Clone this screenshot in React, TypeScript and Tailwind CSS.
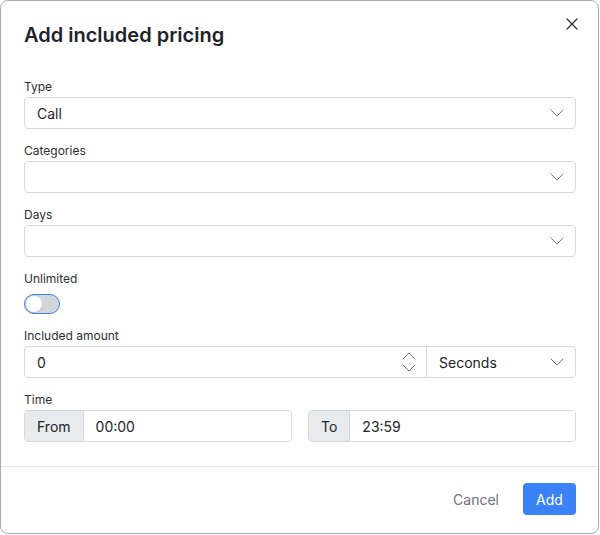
import { X } from 'lucide-react';

function Label({ children }: { children: React.ReactNode }) {
  return <label className="block text-[12px] leading-5 text-[#2b2f33]">{children}</label>;
}

function Chevron({ up = false }: { up?: boolean }) {
  return (
    <svg width="14" height="8" viewBox="0 0 14 8" fill="none" className="text-[#6c7278]">
      <polyline
        points={up ? '1,7 7,1 13,7' : '1,1 7,7 13,1'}
        stroke="currentColor"
        strokeWidth="1"
        strokeLinecap="round"
        strokeLinejoin="round"
      />
    </svg>
  );
}

function SelectBox({ value }: { value?: string }) {
  return (
    <div className="flex h-8 items-center justify-between rounded border border-[#d4d8dd] bg-white pl-3 pr-[11px] text-[14px] text-[#212529]">
      <span>{value}</span>
      <Chevron />
    </div>
  );
}

function TimeGroup({ label, value }: { label: string; value: string }) {
  return (
    <div className="flex h-8 flex-1 overflow-hidden rounded border border-[#d4d8dd] text-[14px] text-[#212529]">
      <div className="flex items-center border-r border-[#d4d8dd] bg-[#e8ebee] px-3">{label}</div>
      <div className="flex flex-1 items-center bg-white px-3">{value}</div>
    </div>
  );
}

export default function App() {
  return (
    <div className="h-[535px] w-[600px] bg-white" style={{ fontFamily: 'Inter, "Noto Sans", sans-serif' }}>
      <div className="flex h-[534px] w-[599px] flex-col rounded-[8px] border border-[#a9acaf] bg-white">
        <div className="relative pl-[23px] pr-[22px] pt-[20px]">
          <h2 className="text-[20px] font-semibold leading-7 text-[#1f2327]">Add included pricing</h2>
          <button className="absolute right-[12px] top-[9px] p-1 text-[#2b2f33]">
            <X size={20} strokeWidth={1.5} />
          </button>
        </div>

        <div className="flex flex-col gap-3 pl-[23px] pr-[22px] pt-[28px] pb-6">
          <div>
            <Label>Type</Label>
            <SelectBox value="Call" />
          </div>
          <div>
            <Label>Categories</Label>
            <SelectBox />
          </div>
          <div>
            <Label>Days</Label>
            <SelectBox />
          </div>
          <div>
            <Label>Unlimited</Label>
            <div className="flex h-[25px] items-start pt-[5px]">
              <div className="flex h-5 w-9 items-center rounded-full border border-[#3b82f6] bg-[#d3d6da] p-[1px]">
                <div className="h-4 w-4 rounded-full bg-white shadow-sm" />
              </div>
            </div>
          </div>
          <div>
            <Label>Included amount</Label>
            <div className="flex h-8 text-[14px] text-[#212529]">
              <div className="flex flex-1 items-center justify-between rounded-l border border-[#d4d8dd] bg-white pl-3 pr-[10px]">
                <span>0</span>
                <div className="flex flex-col items-center gap-[4px]">
                  <Chevron up />
                  <Chevron />
                </div>
              </div>
              <div className="-ml-px flex w-[150px] items-center justify-between rounded-r border border-[#d4d8dd] bg-white pl-3 pr-[11px]">
                <span>Seconds</span>
                <Chevron />
              </div>
            </div>
          </div>
          <div>
            <Label>Time</Label>
            <div className="flex gap-4">
              <TimeGroup label="From" value="00:00" />
              <TimeGroup label="To" value="23:59" />
            </div>
          </div>
        </div>

        <div className="flex items-center justify-end gap-3 border-t border-[#e3e6e9] px-[22px] pt-4">
          <button className="h-8 px-3 text-[14px] text-[#6b7178]">Cancel</button>
          <button className="h-8 w-[53px] rounded bg-[#3b82f6] text-[14px] text-white">Add</button>
        </div>
      </div>
    </div>
  );
}
